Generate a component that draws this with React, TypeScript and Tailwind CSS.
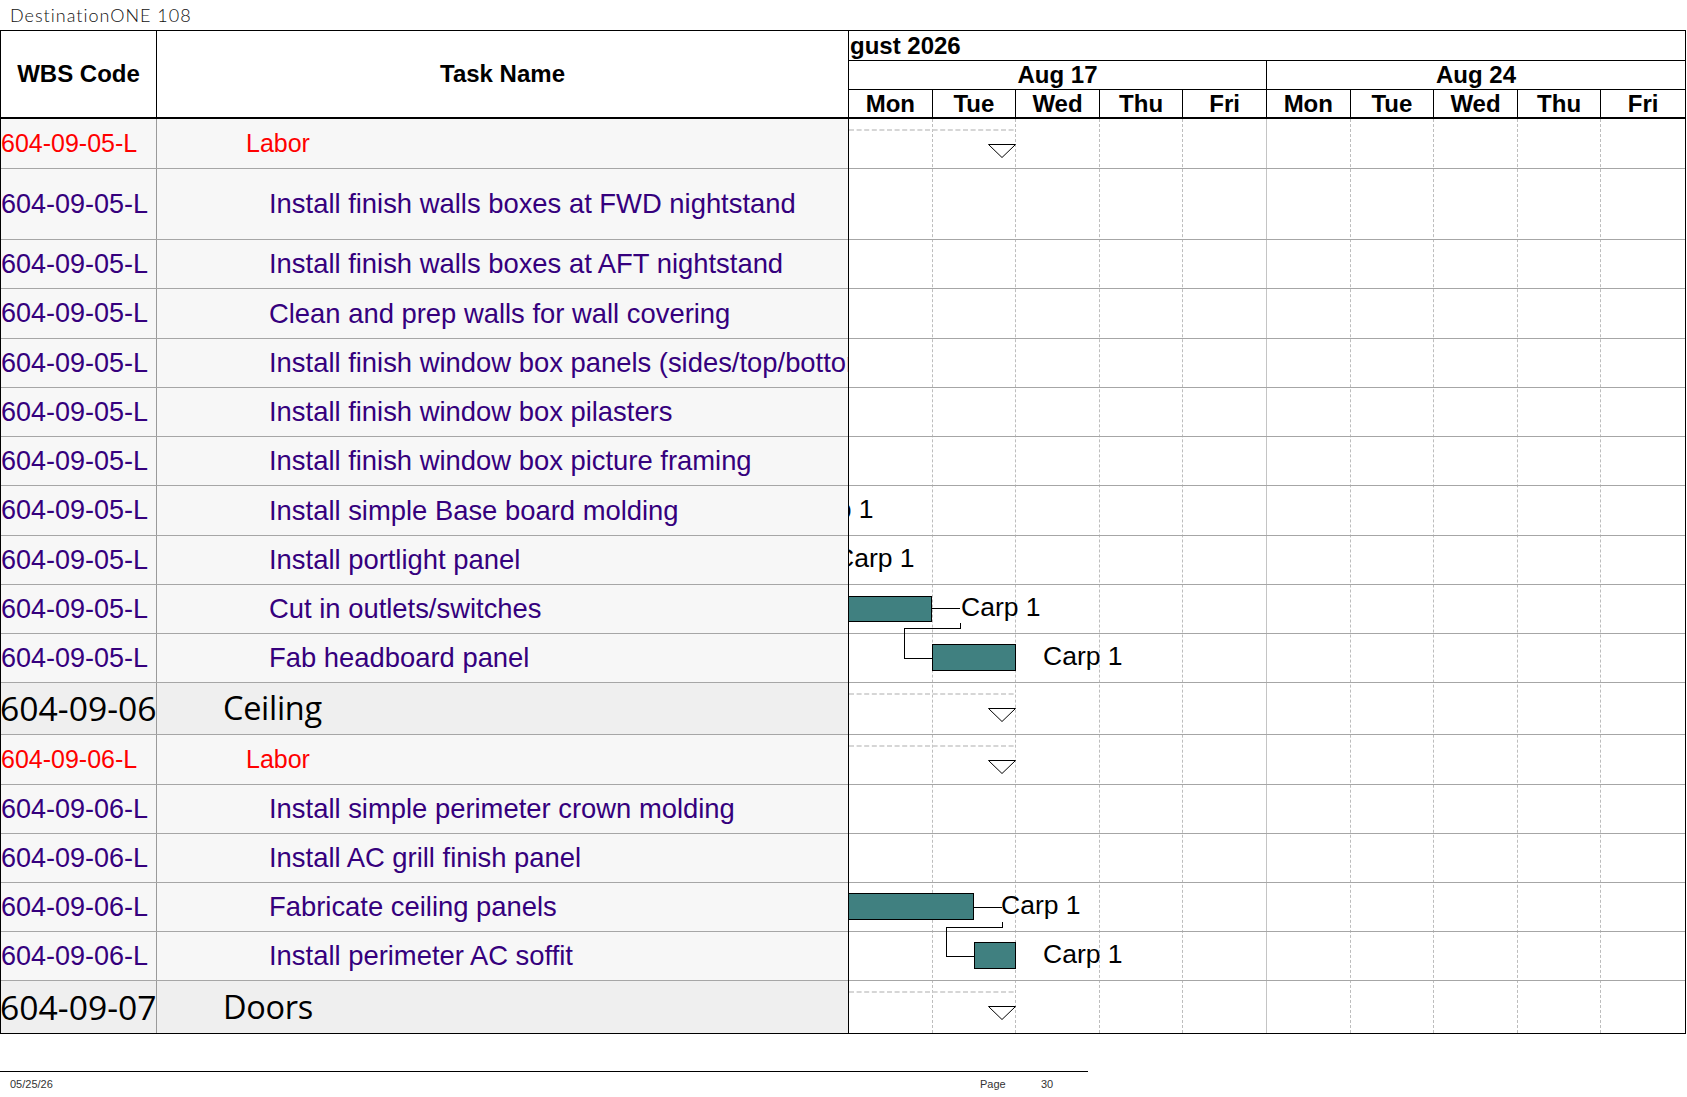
import React from "react";

type Kind = "labor" | "task" | "summary";

type GanttBar = { pos: string; top: string };
type GanttLabel = { pos: string };

type Row = {
  code: string;
  name: string;
  kind: Kind;
  h: string;
  bar?: GanttBar;
  label?: GanttLabel;
};

const ROWS: Row[] = [
  { code: "604-09-05-L", name: "Labor", kind: "labor", h: "h-[50px]" },
  { code: "604-09-05-L", name: "Install finish walls boxes at FWD nightstand", kind: "task", h: "h-[71px]" },
  { code: "604-09-05-L", name: "Install finish walls boxes at AFT nightstand", kind: "task", h: "h-[49px]" },
  { code: "604-09-05-L", name: "Clean and prep walls for wall covering", kind: "task", h: "h-[50px]" },
  { code: "604-09-05-L", name: "Install finish window box panels (sides/top/bottom)", kind: "task", h: "h-[49px]" },
  { code: "604-09-05-L", name: "Install finish window box pilasters", kind: "task", h: "h-[49px]" },
  { code: "604-09-05-L", name: "Install finish window box picture framing", kind: "task", h: "h-[49px]" },
  {
    code: "604-09-05-L",
    name: "Install simple Base board molding",
    kind: "task",
    h: "h-[50px]",
    label: { pos: "left-[-55px]" },
  },
  {
    code: "604-09-05-L",
    name: "Install portlight panel",
    kind: "task",
    h: "h-[49px]",
    label: { pos: "left-[-14px]" },
  },
  {
    code: "604-09-05-L",
    name: "Cut in outlets/switches",
    kind: "task",
    h: "h-[49px]",
    bar: { pos: "left-[-1px] w-[84px]", top: "top-[11px] h-[26px]" },
    label: { pos: "left-[112px]" },
  },
  {
    code: "604-09-05-L",
    name: "Fab headboard panel",
    kind: "task",
    h: "h-[49px]",
    bar: { pos: "left-[83px] w-[84px]", top: "top-[10px] h-[27px]" },
    label: { pos: "left-[194px]" },
  },
  { code: "604-09-06", name: "Ceiling", kind: "summary", h: "h-[52px]" },
  { code: "604-09-06-L", name: "Labor", kind: "labor", h: "h-[50px]" },
  { code: "604-09-06-L", name: "Install simple perimeter crown molding", kind: "task", h: "h-[49px]" },
  { code: "604-09-06-L", name: "Install AC grill finish panel", kind: "task", h: "h-[49px]" },
  {
    code: "604-09-06-L",
    name: "Fabricate ceiling panels",
    kind: "task",
    h: "h-[49px]",
    bar: { pos: "left-[-1px] w-[126px]", top: "top-[10px] h-[27px]" },
    label: { pos: "left-[152px]" },
  },
  {
    code: "604-09-06-L",
    name: "Install perimeter AC soffit",
    kind: "task",
    h: "h-[49px]",
    bar: { pos: "left-[125px] w-[42px]", top: "top-[10px] h-[27px]" },
    label: { pos: "left-[194px]" },
  },
  { code: "604-09-07", name: "Doors", kind: "summary", h: "h-[52px]" },
];

const DAYS = ["Mon", "Tue", "Wed", "Thu", "Fri", "Mon", "Tue", "Wed", "Thu", "Fri"];

function CodeCell({ row }: { row: Row }) {
  if (row.kind === "summary") {
    return (
      <span className="-ml-[1px] font-['Open_Sans',sans-serif] text-[33.7px] text-black">{row.code}</span>
    );
  }
  if (row.kind === "labor") {
    return <span className="text-[25px] text-[#ff0000]">{row.code}</span>;
  }
  return <span className="text-[27px] text-[#35007d]">{row.code}</span>;
}

function NameCell({ row }: { row: Row }) {
  if (row.kind === "summary") {
    return (
      <span className="pl-[66px] font-['Open_Sans',sans-serif] text-[32.5px] tracking-[-0.3px] text-black">
        {row.name}
      </span>
    );
  }
  if (row.kind === "labor") {
    return <span className="pl-[89px] text-[25px] text-[#ff0000]">{row.name}</span>;
  }
  return <span className="pl-[112px] text-[27.4px] text-[#35007d]">{row.name}</span>;
}

function SummaryMark() {
  return (
    <svg className="absolute left-0 top-0 h-[40px] w-[170px]" viewBox="0 0 170 40">
      <line x1="0" y1="11" x2="167" y2="11" stroke="#d6d6d6" strokeWidth="2" strokeDasharray="5 2.6" />
      <polygon points="139.5,25.5 166.5,25.5 153,38.5" fill="white" stroke="black" strokeWidth="1" />
    </svg>
  );
}

export default function App() {
  return (
    <div className="relative h-[1097px] w-[1687px] overflow-hidden bg-white font-['Liberation_Sans',Arial,sans-serif]">
      <div className="h-[30px] pl-[10px] pt-[5px] font-['Lato',sans-serif] text-[18px] font-light leading-[20px] tracking-[1px] text-[#111]">
        DestinationONE 108
      </div>

      <div className="flex w-[1686px] border-t border-b border-black">
        {/* left table */}
        <div className="w-[848px] shrink-0 border-l border-black">
          <div className="flex h-[88px] border-b-2 border-black">
            <div className="flex w-[156px] shrink-0 items-center justify-center border-r border-black text-[24px] font-bold">
              WBS Code
            </div>
            <div className="flex flex-1 items-center justify-center text-[24px] font-bold">Task Name</div>
          </div>
          {ROWS.map((row, i) => {
            const last = i === ROWS.length - 1;
            const bg = row.kind === "summary" ? "bg-[#efefef]" : "bg-[#f7f7f7]";
            return (
              <div
                key={i}
                className={`flex ${row.h} ${bg} ${last ? "" : "border-b border-[#a6a6a6]"}`}
              >
                <div className="flex w-[156px] shrink-0 items-center overflow-hidden whitespace-nowrap border-r border-[#9a9a9a]">
                  <CodeCell row={row} />
                </div>
                <div className="flex min-w-0 flex-1 items-center overflow-hidden whitespace-nowrap">
                  <NameCell row={row} />
                </div>
              </div>
            );
          })}
        </div>

        {/* gantt */}
        <div className="w-[838px] shrink-0 overflow-hidden border-l border-r border-black">
          <div className="h-[88px] border-b-2 border-black leading-none">
            <div className="flex h-[30px] items-center border-b border-black whitespace-nowrap">
              <span className="-ml-[31px] text-[24px] font-bold">August 2026</span>
            </div>
            <div className="grid h-[29px] grid-cols-2 grid-rows-1 border-b border-black">
              <div className="flex items-center justify-center border-r border-black text-[24px] font-bold">Aug 17</div>
              <div className="flex items-center justify-center text-[24px] font-bold">Aug 24</div>
            </div>
            <div className="grid h-[28px] grid-cols-10 grid-rows-1">
              {DAYS.map((d, i) => (
                <div
                  key={i}
                  className={`flex items-center justify-center text-[24px] font-bold ${i < 9 ? "border-r border-black" : ""}`}
                >
                  {d}
                </div>
              ))}
            </div>
          </div>

          <div className="relative">
            <div className="pointer-events-none absolute inset-0 grid grid-cols-10">
              {DAYS.map((_, i) => (
                <div
                  key={i}
                  className={
                    i === 9
                      ? ""
                      : i === 4
                        ? "border-r border-[#c4c4c4]"
                        : "border-r border-dashed border-[#bdbdbd]"
                  }
                />
              ))}
            </div>

            {ROWS.map((row, i) => {
              const last = i === ROWS.length - 1;
              return (
                <div
                  key={i}
                  className={`relative ${row.h} ${last ? "" : "border-b border-[#a6a6a6]"}`}
                >
                  {row.kind !== "task" && <SummaryMark />}
                  {row.bar && (
                    <div className={`absolute border border-black bg-[#408080] ${row.bar.pos} ${row.bar.top}`} />
                  )}
                  {row.label && (
                    <div
                      className={`absolute top-0 bottom-[2px] flex items-center whitespace-nowrap text-[26.5px] text-black ${row.label.pos}`}
                    >
                      Carp 1
                    </div>
                  )}
                </div>
              );
            })}

            <svg className="pointer-events-none absolute left-0 top-0 h-full w-full" shapeRendering="crispEdges">
              <polyline points="83,489.5 111,489.5" fill="none" stroke="black" strokeWidth="1" />
              <polyline
                points="111.5,504 111.5,509.5 55.5,509.5 55.5,539.5 83,539.5"
                fill="none"
                stroke="black"
                strokeWidth="1"
              />
              <polyline points="125,788.5 153,788.5" fill="none" stroke="black" strokeWidth="1" />
              <polyline
                points="153.5,803 153.5,808.5 97.5,808.5 97.5,837.5 125,837.5"
                fill="none"
                stroke="black"
                strokeWidth="1"
              />
            </svg>
          </div>
        </div>
      </div>

      <div className="mt-[37px] h-px w-[1088px] bg-black" />
      <div className="mt-[6px] flex text-[11px] leading-[12px] text-[#333]">
        <span className="w-[980px] shrink-0 pl-[10px]">05/25/26</span>
        <span className="w-[61px] shrink-0">Page</span>
        <span>30</span>
      </div>
    </div>
  );
}
